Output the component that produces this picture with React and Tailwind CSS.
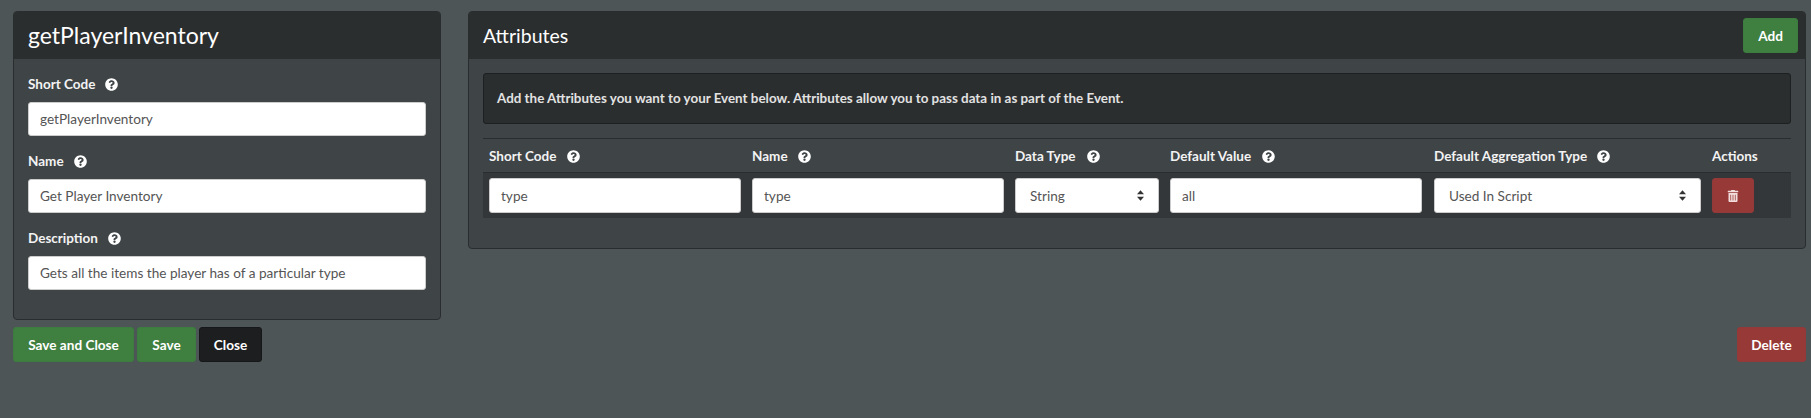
import { FaQuestionCircle, FaTrashAlt } from 'react-icons/fa'

const font = { fontFamily: 'Lato' }

function Help({ className = 'ml-[10px]' }) {
  return <FaQuestionCircle className={`inline-block text-[13px] text-white ${className}`} />
}

function Field({ label, value, className = '' }) {
  return (
    <div className={className}>
      <label className="flex h-[18px] items-center text-[13.5px] font-bold text-[#f3f3f3]">
        {label}
        <Help />
      </label>
      <input
        readOnly
        defaultValue={value}
        className="mt-[9px] block h-[34px] w-full rounded-[3px] border border-[#ccc] bg-white px-[11px] text-[13.6px] text-[#555] outline-none"
      />
    </div>
  )
}

function Btn({ children, color, className = '' }) {
  return (
    <button
      type="button"
      className={`h-[35px] rounded-[3px] border pt-[1px] text-[13.6px] font-bold text-white ${color} ${className}`}
    >
      {children}
    </button>
  )
}

const green = 'border-[#3d7c3f] bg-[#3f8040]'
const red = 'border-[#93393a] bg-[#973937]'

function Select({ value, options, className = '' }) {
  return (
    <div className={`relative ${className}`}>
      <select
        defaultValue={value}
        className="block h-[35px] w-full appearance-none rounded-[3px] border border-[#ccc] bg-white pl-[14px] pr-[24px] pt-[1px] text-[13.6px] text-[#555] outline-none"
      >
        {options.map((o) => (
          <option key={o}>{o}</option>
        ))}
      </select>
      <svg viewBox="0 0 8 12" className="pointer-events-none absolute right-[15px] top-[12px] h-[11px] w-[7px] fill-[#333]">
        <path d="M4 0 8 4.6H0zM4 12 0 7.4h8z" />
      </svg>
    </div>
  )
}

function CellInput({ value }) {
  return (
    <input
      readOnly
      defaultValue={value}
      className="block h-[35px] w-full rounded-[3px] border border-[#ccc] bg-white px-[11px] text-[13.6px] text-[#555] outline-none"
    />
  )
}

const cols = 'grid grid-cols-[252px_252px_144px_252px_268px_1fr] gap-x-[11px] px-[6px]'

export default function App() {
  return (
    <div style={font} className="h-[418px] bg-[#4d5557] pl-[13px] pr-[5px] pt-[11px]">
      <div className="flex items-start gap-[27px]">
        <div className="h-[309px] w-[428px] shrink-0 overflow-hidden rounded-[4px] border border-[#2a2d2e] bg-[#3f4447]">
          <div className="flex h-[47px] items-center bg-[#2b2e2f] px-[14px] text-[23px] text-white">
            getPlayerInventory
          </div>
          <div className="px-[14px] pt-[16px]">
            <Field label="Short Code" value="getPlayerInventory" />
            <Field label="Name" value="Get Player Inventory" className="mt-[16px]" />
            <Field label="Description" value="Gets all the items the player has of a particular type" className="mt-[16px]" />
          </div>
        </div>

        <div className="h-[238px] min-w-0 flex-1 overflow-hidden rounded-[4px] border border-[#2a2d2e] bg-[#3f4447]">
          <div className="flex h-[47px] items-center justify-between bg-[#2b2e2f] pl-[14px] pr-[7px] text-[19.5px] text-white">
            Attributes
            <Btn color={green} className="w-[55px]">Add</Btn>
          </div>
          <div className="px-[14px] pt-[14px]">
            <div className="flex h-[51px] items-center rounded-[3px] border border-[#1d1f20] bg-[#2b2e2f] px-[13px] text-[13.4px] font-bold text-[#e2e2e2]">
              Add the Attributes you want to your Event below. Attributes allow you to pass data in as part of the Event.
            </div>
            <div className="mt-[14px] border-t border-[#2a2d2e]">
              <div className={`${cols} h-[33px] items-center pt-[1px] text-[13.5px] font-bold text-[#f3f3f3]`}>
                <div className="flex items-center">Short Code<Help className="ml-[11px]" /></div>
                <div className="flex items-center">Name<Help /></div>
                <div className="flex items-center">Data Type<Help className="ml-[11px]" /></div>
                <div className="flex items-center">Default Value<Help className="ml-[11px]" /></div>
                <div className="flex items-center pl-[1px]">Default Aggregation Type<Help /></div>
                <div>Actions</div>
              </div>
              <div className={`${cols} h-[46px] items-center border-t border-[#2a2d2e] bg-[#343739]`}>
                <CellInput value="type" />
                <CellInput value="type" />
                <Select value="String" options={['String', 'Number', 'JSON']} />
                <CellInput value="all" />
                <Select value="Used In Script" options={['Used In Script', 'Sum', 'Max', 'Min']} className="ml-[1px]" />
                <Btn color={red} className="flex w-[42px] items-center justify-center">
                  <FaTrashAlt className="text-[12px] text-[#f3dede]" />
                </Btn>
              </div>
            </div>
          </div>
        </div>
      </div>

      <div className="mt-[7px] flex items-center justify-between">
        <div className="flex gap-[3px]">
          <Btn color={green} className="w-[121px]">Save and Close</Btn>
          <Btn color={green} className="w-[59px]">Save</Btn>
          <Btn color="border-[#151718] bg-[#1c1e1f]" className="w-[63px]">Close</Btn>
        </div>
        <Btn color={red} className="w-[69px]">Delete</Btn>
      </div>
    </div>
  )
}
